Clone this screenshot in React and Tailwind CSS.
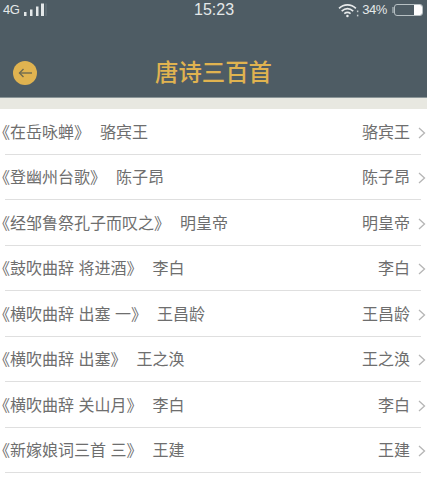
import React from 'react';

const poems = [
    { title: '《在岳咏蝉》', author: '骆宾王' },
    { title: '《登幽州台歌》', author: '陈子昂' },
    { title: '《经邹鲁祭孔子而叹之》', author: '明皇帝' },
    { title: '《鼓吹曲辞 将进酒》', author: '李白' },
    { title: '《横吹曲辞 出塞 一》', author: '王昌龄' },
    { title: '《横吹曲辞 出塞》', author: '王之涣' },
    { title: '《横吹曲辞 关山月》', author: '李白' },
    { title: '《新嫁娘词三首 三》', author: '王建' },
];

const Signal = () => (
    <svg width="24" height="14" viewBox="0 0 24 14">
        <rect x="0" y="9" width="2.5" height="4" fill="#e4e8e9" />
        <rect x="6" y="6.5" width="2.5" height="6.5" fill="#e4e8e9" />
        <rect x="12" y="3.5" width="2.5" height="9.5" fill="#e4e8e9" />
        <rect x="17" y="0.5" width="3" height="12.5" fill="#e4e8e9" />
        <rect x="21.5" y="0.5" width="1" height="12.5" fill="#6d7b82" />
    </svg>
);

const Wifi = () => (
    <svg width="21" height="15" viewBox="0 0 20 14" fill="none" stroke="#e8ebec" strokeWidth="1.6">
        <path d="M1 5 C5.5 0.5 12.5 0.5 17 5" />
        <path d="M3.5 7.6 C7 4.6 11 4.6 14.5 7.6" />
        <path d="M6 10 C7.8 8.6 10.2 8.6 12 10" />
        <circle cx="9" cy="12.2" r="1.2" fill="#e8ebec" stroke="none" />
        <rect x="18" y="7" width="1.4" height="1.6" fill="#c5ccce" stroke="none" />
        <rect x="18" y="11" width="1.4" height="1.6" fill="#c5ccce" stroke="none" />
    </svg>
);

const Battery = () => (
    <div className="flex items-center">
        <div className="w-[2px] h-[6px] bg-[#8a969b]" />
        <div className="w-[29px] h-[12px] rounded-[3px] border border-[#b7c0c3] flex justify-end">
            <div className="w-[8px] h-full bg-white rounded-r-[2px]" />
        </div>
    </div>
);

const BackButton = () => (
    <div className="w-[24px] h-[24px] rounded-full bg-[#e0b350] flex items-center justify-center">
        <svg width="15" height="10" viewBox="0 0 15 10" fill="none" stroke="#6f6a50" strokeWidth="1.4">
            <path d="M14 5 H1.5" />
            <path d="M5.5 1 L1.5 5 L5.5 9" />
        </svg>
    </div>
);

const Chevron = () => (
    <svg width="8" height="12" viewBox="0 0 8 12" fill="none" stroke="#b5b5b5" strokeWidth="1.3" className="ml-[8px]">
        <path d="M1 1 L6.5 6 L1 11" />
    </svg>
);

const App = () => {
    return (
        <div
            className="w-[427px] h-[479px] overflow-hidden bg-white"
            style={{ fontFamily: '"Liberation Sans", "Noto Sans CJK SC", sans-serif' }}
        >
            <div className="h-[97px] bg-[#4e5c64] flex flex-col">
                <div className="h-[20px] flex items-center pl-[3px] pr-[4px]">
                    <div className="w-[191px] flex items-center">
                        <span className="text-[13px] text-[#e4e8e9] tracking-[-0.5px] mr-[5px]">4G</span>
                        <Signal />
                    </div>
                    <span className="text-[16px] leading-[20px] text-[#e4e8e9]">15:23</span>
                    <div className="ml-auto flex items-center gap-[3px]">
                        <Wifi />
                        <span className="text-[13px] text-[#e4e8e9] tracking-[-0.4px] mr-[2px]">34%</span>
                        <Battery />
                    </div>
                </div>
                <div className="flex-1 flex items-center pl-[13px] pt-[29px]">
                    <BackButton />
                    <span className="ml-[118px] text-[23.4px] leading-[32px] font-medium text-[#e0b350]">唐诗三百首</span>
                </div>
            </div>
            <div className="h-[12px] bg-[#e8e8e1] border-t border-[#8b9698]" />
            <div className="flex flex-col">
                {poems.map((poem) => (
                    <div key={poem.title} className="h-[45.5px] flex flex-col">
                        <div className="flex-1 flex items-center justify-between pt-[3px] pl-[2px] pr-[1px] text-[16px] text-[#6e6e6e]">
                            <div className="whitespace-pre [text-spacing-trim:trim-start]">
                                <span>{poem.title}</span>
                                <span className="ml-[10px]">{poem.author}</span>
                            </div>
                            <div className="flex items-center">
                                <span>{poem.author}</span>
                                <Chevron />
                            </div>
                        </div>
                        <div className="h-[1px] bg-[#dfdfdf] ml-[5px] mr-[6px]" />
                    </div>
                ))}
            </div>
        </div>
    );
};

export default App;
